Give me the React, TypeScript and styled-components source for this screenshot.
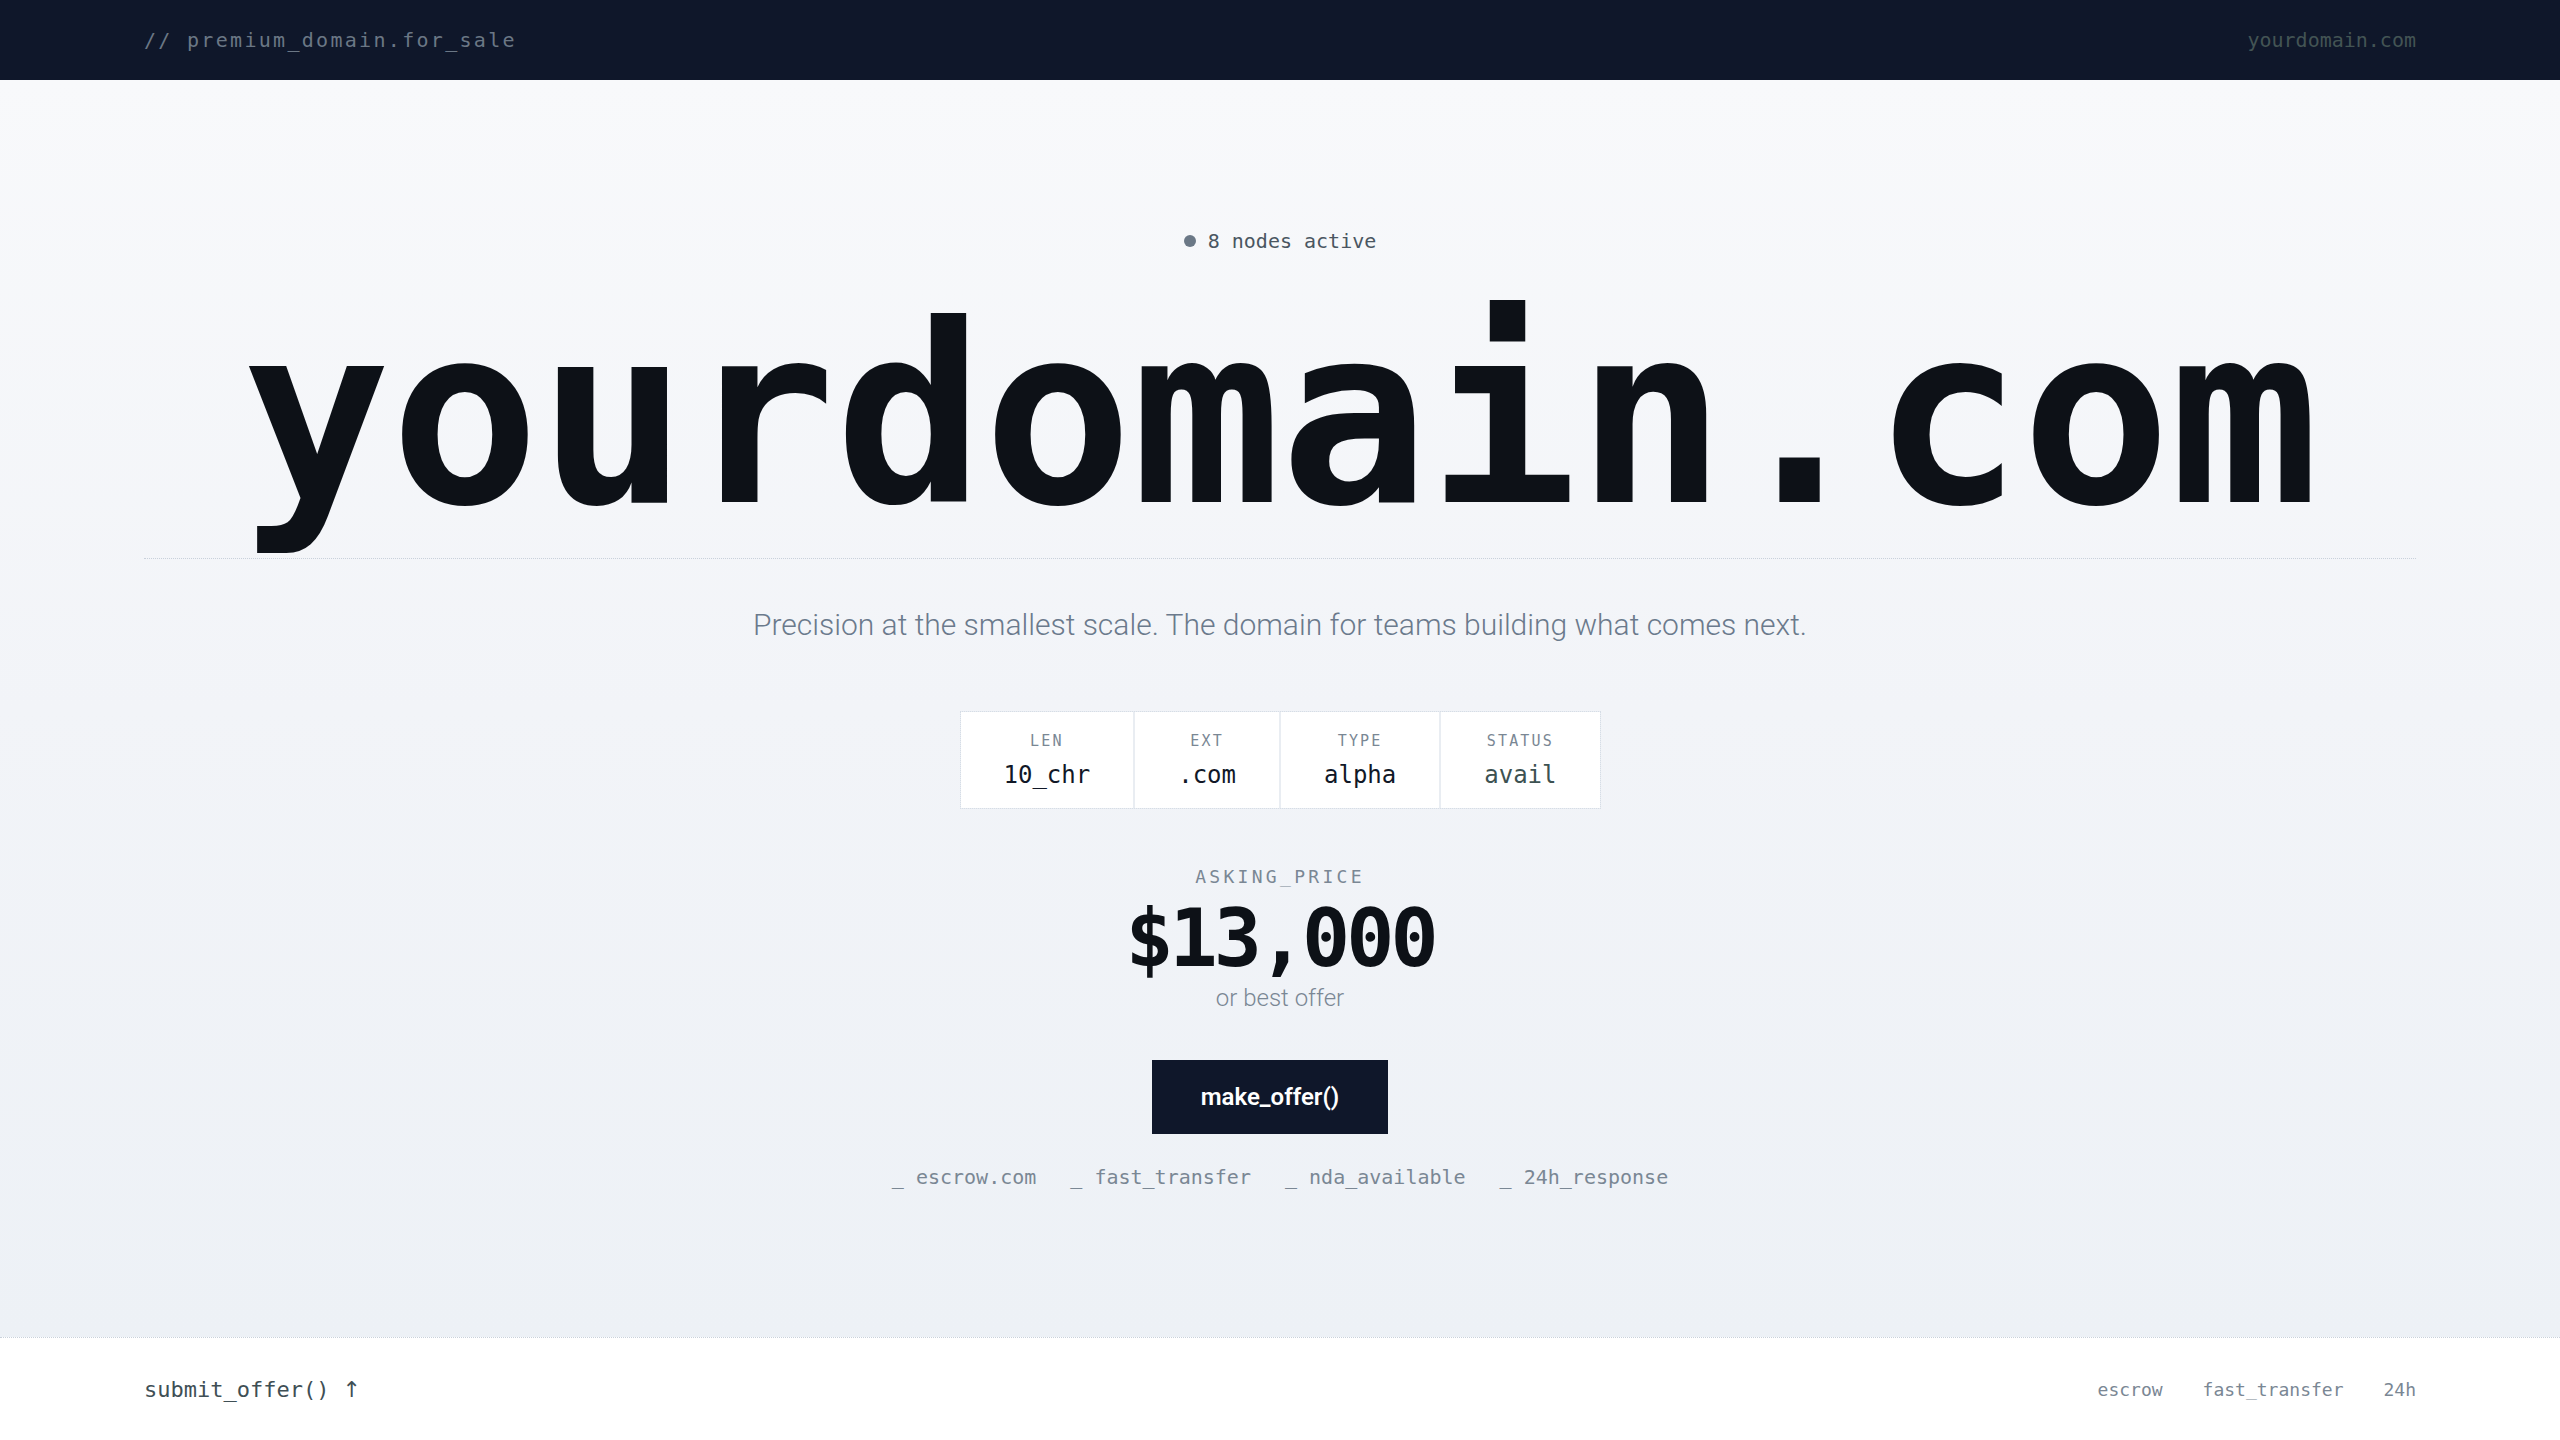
import React from "react";
import styled, { createGlobalStyle } from "styled-components";

const mono = `"DejaVu Sans Mono", "Liberation Mono", monospace`;
const sans = `"Roboto", "Noto Sans", "Liberation Sans", sans-serif`;

const Global = createGlobalStyle`
  html, body { margin: 0; padding: 0; }
  body { font-family: ${sans}; background: #ffffff; }
  * { box-sizing: border-box; }
`;

const Page = styled.div`
  display: flex;
  flex-direction: column;
  min-height: 100vh;
`;

const TopBar = styled.header`
  height: 80px;
  flex: 0 0 80px;
  background: #0f172a;
  display: flex;
  align-items: center;
  justify-content: space-between;
  padding: 0 144px;
`;

const TopLeft = styled.span`
  font-family: ${mono};
  font-size: 20px;
  letter-spacing: 2.3px;
  color: #6b7785;
`;

const TopRight = styled.span`
  font-family: ${mono};
  font-size: 20px;
  color: #435454;
`;

const Main = styled.main`
  flex: 1;
  display: flex;
  flex-direction: column;
  align-items: center;
  justify-content: center;
  padding: 0 144px;
  background: linear-gradient(180deg, #f8f9fb 0%, #f2f4f8 50%, #edf1f6 100%);
`;

const Status = styled.div`
  display: flex;
  align-items: center;
  gap: 12px;
  height: 24px;
  font-family: ${mono};
  font-size: 20px;
  color: #4a5661;
`;

const Dot = styled.span`
  width: 12px;
  height: 12px;
  border-radius: 50%;
  background: #6b7886;
`;

const Heading = styled.h1`
  align-self: stretch;
  margin: 39px 0 0;
  padding-bottom: 18px;
  border-bottom: 1px dotted #c9d1db;
  text-align: center;
  font-family: ${mono};
  font-weight: 700;
  font-size: 248px;
  line-height: 248px;
  letter-spacing: -1px;
  color: #0d1117;
  white-space: nowrap;
`;

const Tagline = styled.p`
  margin: 46px 0 0;
  font-family: ${sans};
  font-weight: 300;
  font-size: 30px;
  line-height: 40px;
  color: #6b7a8c;
`;

const Stats = styled.div`
  margin-top: 66px;
  display: flex;
  border: 1px dotted #d6dde6;
  background: #e9edf2;
  gap: 2px;
`;

const Stat = styled.div`
  display: flex;
  flex-direction: column;
  align-items: center;
  gap: 9px;
  padding: 19px 43px 18px;
  background: #ffffff;
`;

const StatLabel = styled.span`
  font-family: ${mono};
  font-size: 15px;
  line-height: 20px;
  letter-spacing: 2.2px;
  color: #7a8794;
`;

const StatValue = styled.span<{ $muted?: boolean }>`
  font-family: ${mono};
  font-size: 24px;
  line-height: 30px;
  color: ${(p) => (p.$muted ? "#3d5252" : "#111827")};
`;

const PriceLabel = styled.div`
  margin-top: 56px;
  font-family: ${mono};
  font-size: 18px;
  line-height: 24px;
  letter-spacing: 3.3px;
  color: #7a8794;
`;

const Price = styled.div`
  margin-top: 10px;
  font-family: ${mono};
  font-weight: 700;
  font-size: 80px;
  line-height: 80px;
  letter-spacing: -4px;
  color: #0d1117;
`;

const PriceNote = styled.div`
  margin-top: 4px;
  font-family: ${sans};
  font-weight: 300;
  font-size: 24px;
  line-height: 30px;
  color: #7a8794;
`;

const OfferButton = styled.button`
  margin: 47px 20px 0 0;
  height: 74px;
  width: 236px;
  border: none;
  background: #0f172a;
  color: #ffffff;
  font-family: ${sans};
  font-weight: 600;
  font-size: 24px;
  cursor: pointer;
`;

const Features = styled.ul`
  margin: 31px 0 0;
  padding: 0;
  list-style: none;
  display: flex;
  gap: 34px;
`;

const Feature = styled.li`
  font-family: ${mono};
  font-size: 20px;
  line-height: 24px;
  color: #7a8794;
`;

const Footer = styled.footer`
  flex: 0 0 103px;
  height: 103px;
  background: #ffffff;
  border-top: 1px dotted #c9d1db;
  display: flex;
  align-items: center;
  justify-content: space-between;
  padding: 0 144px;
`;

const FooterAction = styled.span`
  display: flex;
  align-items: center;
  gap: 13px;
  font-family: ${mono};
  font-size: 22px;
  color: #3f4f55;
`;

const Arrow = styled.span`
  font-family: "DejaVu Sans", sans-serif;
  font-size: 22px;
`;

const FooterLinks = styled.div`
  display: flex;
  gap: 40px;
`;

const FooterLink = styled.span`
  font-family: ${mono};
  font-size: 18px;
  color: #7a8794;
`;

const stats = [
  { label: "LEN", value: "10_chr" },
  { label: "EXT", value: ".com" },
  { label: "TYPE", value: "alpha" },
  { label: "STATUS", value: "avail", muted: true },
];

const features = ["escrow.com", "fast_transfer", "nda_available", "24h_response"];

export default function App() {
  return (
    <Page>
      <Global />
      <TopBar>
        <TopLeft>// premium_domain.for_sale</TopLeft>
        <TopRight>yourdomain.com</TopRight>
      </TopBar>
      <Main>
        <Status>
          <Dot />
          <span>8 nodes active</span>
        </Status>
        <Heading>yourdomain.com</Heading>
        <Tagline>Precision at the smallest scale. The domain for teams building what comes next.</Tagline>
        <Stats>
          {stats.map((s) => (
            <Stat key={s.label}>
              <StatLabel>{s.label}</StatLabel>
              <StatValue $muted={s.muted}>{s.value}</StatValue>
            </Stat>
          ))}
        </Stats>
        <PriceLabel>ASKING_PRICE</PriceLabel>
        <Price>$13,000</Price>
        <PriceNote>or best offer</PriceNote>
        <OfferButton>make_offer()</OfferButton>
        <Features>
          {features.map((f) => (
            <Feature key={f}>_ {f}</Feature>
          ))}
        </Features>
      </Main>
      <Footer>
        <FooterAction>
          <span>submit_offer()</span>
          <Arrow>↑</Arrow>
        </FooterAction>
        <FooterLinks>
          <FooterLink>escrow</FooterLink>
          <FooterLink>fast_transfer</FooterLink>
          <FooterLink>24h</FooterLink>
        </FooterLinks>
      </Footer>
    </Page>
  );
}
